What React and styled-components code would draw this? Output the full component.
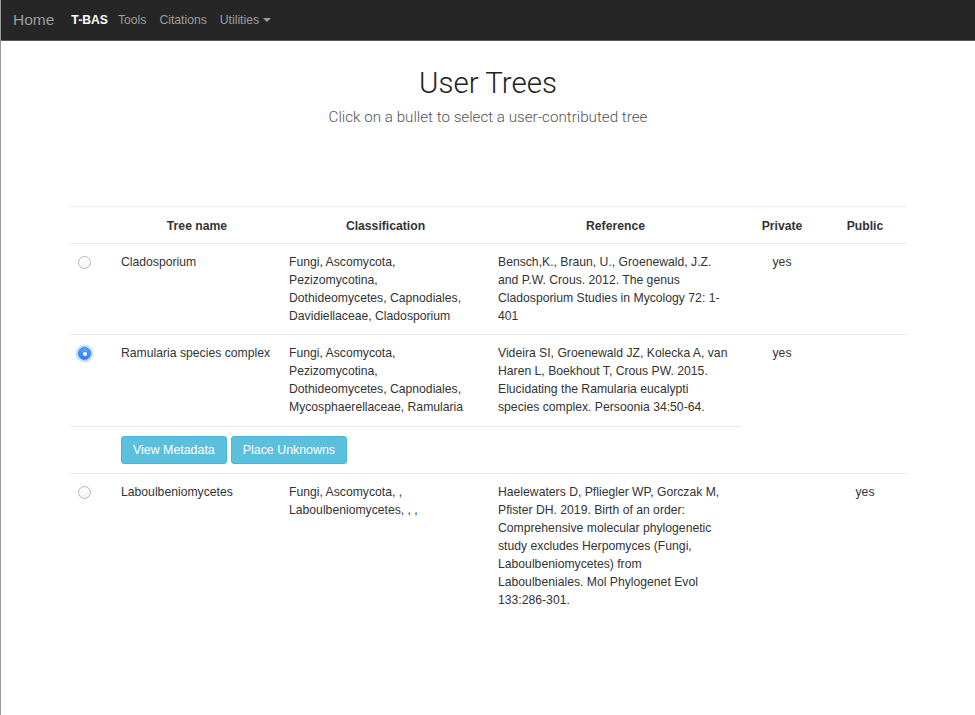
import React from "react";
import styled, { createGlobalStyle } from "styled-components";

const Global = createGlobalStyle`
  html, body { margin: 0; padding: 0; background: #fff; }
  body {
    font-family: "Liberation Sans", Arial, sans-serif;
    font-size: 12.2px;
    color: #333;
  }
`;

const Page = styled.div`
  min-height: 715px;
  border-left: 1px solid #9a9a9a;
  box-sizing: border-box;
`;

const Nav = styled.nav`
  height: 41px;
  background: #262626;
  border-bottom: 1px solid #5a5a5a;
  display: flex;
  align-items: center;
  padding-left: 12px;
  box-sizing: border-box;
`;

const Brand = styled.a`
  font-size: 15.5px;
  color: #9d9d9d;
  margin-right: 17px;
`;

const NavLink = styled.a`
  font-size: 12.2px;
  color: ${(p) => (p.$active ? "#fff" : "#9d9d9d")};
  font-weight: ${(p) => (p.$active ? "bold" : "normal")};
  margin-right: ${(p) => (p.$active ? 10 : 13)}px;
  display: flex;
  align-items: center;
`;

const Caret = styled.span`
  display: inline-block;
  width: 0;
  height: 0;
  margin-left: 4px;
  border-top: 4px solid #9d9d9d;
  border-left: 4px solid transparent;
  border-right: 4px solid transparent;
`;

const Header = styled.header`
  text-align: center;
  padding-top: 26px;
`;

const Title = styled.h1`
  margin: 0;
  font-family: "Roboto", "Liberation Sans", sans-serif;
  font-weight: 300;
  font-size: 29.5px;
  line-height: 33px;
  color: #222;
`;

const Subtitle = styled.p`
  margin: 8px 0 0;
  font-family: "Roboto", "Liberation Sans", sans-serif;
  font-weight: 300;
  font-size: 15.2px;
  color: #555;
`;

const Table = styled.table`
  margin: 80px 0 0 69px;
  width: 837px;
  border-collapse: collapse;
  table-layout: fixed;
  border-top: 1px solid #eee;
`;

const Th = styled.th`
  font-weight: bold;
  text-align: center;
  padding: 10px 8px 8px;
  line-height: 18px;
  border-bottom: 1px solid #e8e8e8;
`;

const Td = styled.td`
  vertical-align: top;
  padding: 9px ${(p) => p.$padRight ?? 8}px ${(p) => p.$padBottom ?? 9}px 8px;
  line-height: 18px;
  text-align: ${(p) => (p.$center ? "center" : "left")};
  border-top: 1px solid #e8e8e8;
`;

const Radio = styled.span`
  position: relative;
  display: block;
  width: 13px;
  height: 13px;
  margin: 3px 0 0 0;
  border-radius: 50%;
  box-sizing: border-box;
  border: 1px solid ${(p) => (p.$checked ? "#2f7fea" : "#b8b8b8")};
  background: ${(p) =>
    p.$checked ? "linear-gradient(#5aa3fb, #2c82f2)" : "linear-gradient(#fff, #f3f3f3)"};
  box-shadow: ${(p) => (p.$checked ? "0 0 2px 2px rgba(90,160,250,0.45)" : "none")};
  &::after {
    content: "";
    display: ${(p) => (p.$checked ? "block" : "none")};
    position: absolute;
    left: 50%;
    top: 50%;
    width: 4px;
    height: 4px;
    margin: -2px 0 0 -2px;
    border-radius: 50%;
    background: #fff;
  }
`;

const ButtonRow = styled.div`
  display: flex;
  gap: 4px;
`;

const Button = styled.button`
  font-family: "Liberation Sans", Arial, sans-serif;
  font-size: 12.4px;
  color: #fff;
  background: #5bc0de;
  border: 1px solid #46b8da;
  border-radius: 3px;
  height: 28px;
  padding: 0 11px;
  line-height: 26px;
`;

const rows = [
  {
    name: "Cladosporium",
    cls: "Fungi, Ascomycota, Pezizomycotina, Dothideomycetes, Capnodiales, Davidiellaceae, Cladosporium",
    ref: "Bensch,K., Braun, U., Groenewald, J.Z. and P.W. Crous. 2012. The genus Cladosporium Studies in Mycology 72: 1-401",
    priv: "yes",
    pub: "",
  },
  {
    name: "Ramularia species complex",
    cls: "Fungi, Ascomycota, Pezizomycotina, Dothideomycetes, Capnodiales, Mycosphaerellaceae, Ramularia",
    ref: "Videira SI, Groenewald JZ, Kolecka A, van Haren L, Boekhout T, Crous PW. 2015. Elucidating the Ramularia eucalypti species complex. Persoonia 34:50-64.",
    priv: "yes",
    pub: "",
    selected: true,
  },
  {
    name: "Laboulbeniomycetes",
    cls: "Fungi, Ascomycota, , Laboulbeniomycetes, , ,",
    ref: "Haelewaters D, Pfliegler WP, Gorczak M, Pfister DH. 2019. Birth of an order: Comprehensive molecular phylogenetic study excludes Herpomyces (Fungi, Laboulbeniomycetes) from Laboulbeniales. Mol Phylogenet Evol 133:286-301.",
    priv: "",
    pub: "yes",
  },
];

export default function App() {
  return (
    <Page>
      <Global />
      <Nav>
        <Brand>Home</Brand>
        <NavLink $active>T-BAS</NavLink>
        <NavLink>Tools</NavLink>
        <NavLink>Citations</NavLink>
        <NavLink>
          Utilities <Caret />
        </NavLink>
      </Nav>
      <Header>
        <Title>User Trees</Title>
        <Subtitle>Click on a bullet to select a user-contributed tree</Subtitle>
      </Header>
      <Table>
        <colgroup>
          <col style={{ width: 43 }} />
          <col style={{ width: 168 }} />
          <col style={{ width: 209 }} />
          <col style={{ width: 251 }} />
          <col style={{ width: 82 }} />
          <col style={{ width: 84 }} />
        </colgroup>
        <thead>
          <tr>
            <Th />
            <Th>Tree name</Th>
            <Th>Classification</Th>
            <Th>Reference</Th>
            <Th>Private</Th>
            <Th>Public</Th>
          </tr>
        </thead>
        <tbody>
          {rows.map((r) => {
            const pb = r.selected ? 10 : 9;
            return (
              <React.Fragment key={r.name}>
                <tr>
                  <Td $padBottom={pb}>
                    <Radio $checked={r.selected} />
                  </Td>
                  <Td $padBottom={pb}>{r.name}</Td>
                  <Td $padBottom={pb} $padRight={24}>{r.cls}</Td>
                  <Td $padBottom={pb} $padRight={13}>{r.ref}</Td>
                  <Td $center rowSpan={r.selected ? 2 : 1}>
                    {r.priv}
                  </Td>
                  <Td $center rowSpan={r.selected ? 2 : 1}>
                    {r.pub}
                  </Td>
                </tr>
                {r.selected && (
                  <tr>
                    <Td />
                    <Td colSpan={3}>
                      <ButtonRow>
                        <Button>View Metadata</Button>
                        <Button>Place Unknowns</Button>
                      </ButtonRow>
                    </Td>
                  </tr>
                )}
              </React.Fragment>
            );
          })}
        </tbody>
      </Table>
    </Page>
  );
}
